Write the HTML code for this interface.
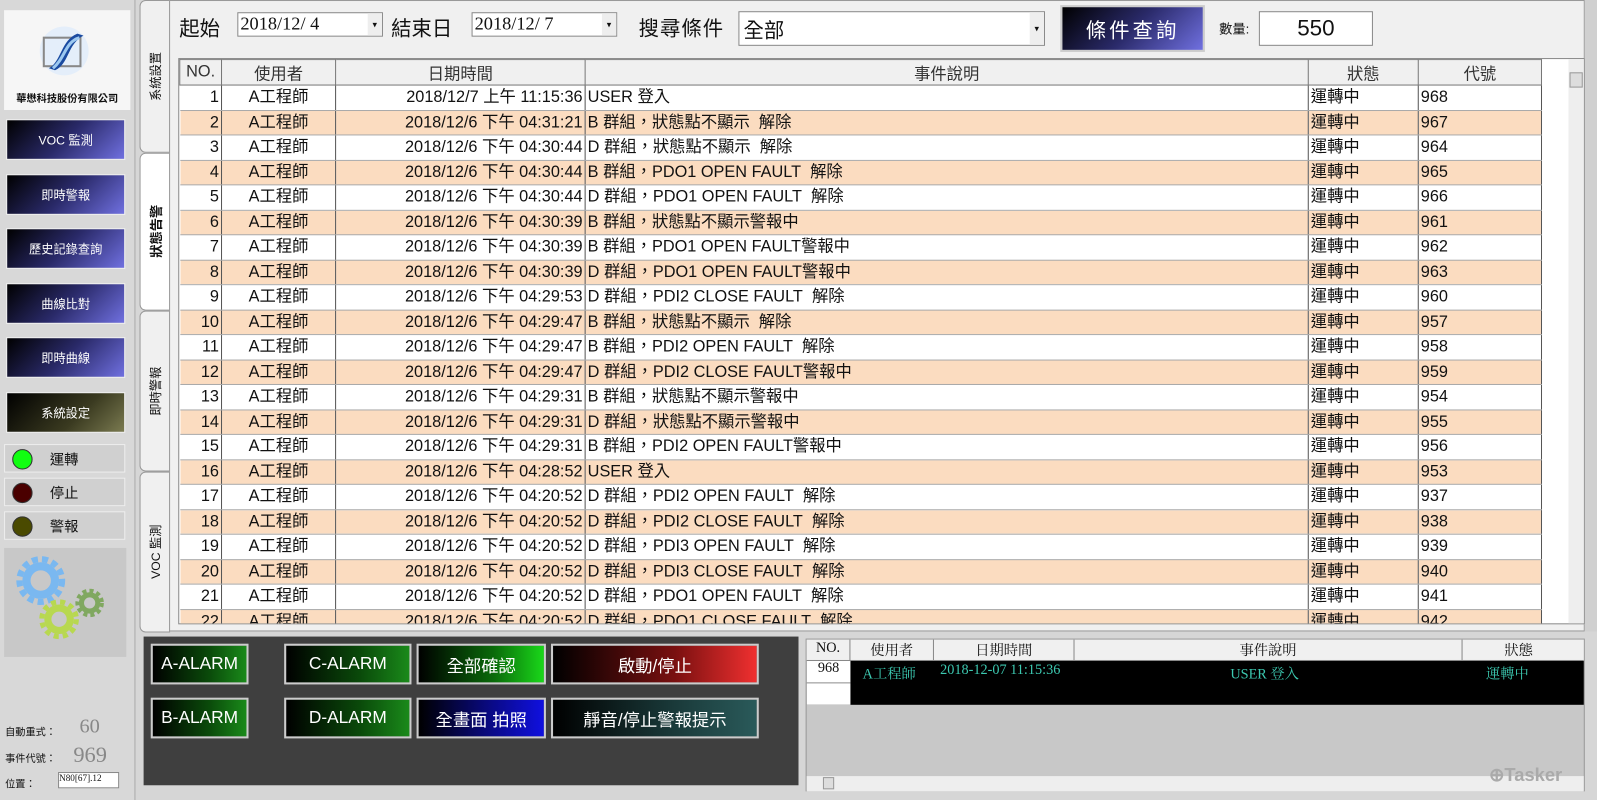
<!DOCTYPE html>
<html><head><meta charset="utf-8"><style>
*{box-sizing:border-box;margin:0;padding:0}
html,body{width:1597px;height:800px;overflow:hidden;background:#d6d6d6}
#w{width:1568px;height:786px;position:relative;transform:scale(1.0185);transform-origin:0 0;font-family:"Liberation Sans","Noto Sans CJK TC",sans-serif;color:#111}
.abs{position:absolute}
.nav{position:absolute;left:6px;width:117px;height:40px;border:1px solid #eee;color:#fff;font-size:12px;display:flex;align-items:center;justify-content:center;background:linear-gradient(135deg,#000 0%,#2a2a6a 50%,#7070e0 100%)}
.ind{position:absolute;left:4px;width:119px;height:28px;border:1px solid #eee;background:#d0d0d0;font-size:14px}
.ind i{position:absolute;left:7px;top:4px;width:20px;height:20px;border-radius:50%;border:1px solid #333}
.ind span{position:absolute;left:44px;top:4px}
.tab{position:absolute;left:137px;width:30px;background:#f0f0f0;border:1px solid #999;border-radius:6px 0 0 6px;font-size:12px;display:flex;align-items:center;justify-content:center}
.tab span{writing-mode:vertical-rl;text-orientation:sideways;transform:rotate(180deg);white-space:nowrap}
table{border-collapse:collapse;font-size:16px}
#g td{height:24.5px;border-right:1px solid #555;border-bottom:1px solid #aaa;padding:0 2px;white-space:nowrap;overflow:hidden;line-height:23px}
#g tr:nth-child(even) td{background:#fbdcc0}
#g tr:nth-child(odd) td{background:#fff}
#g th{height:24px;background:#f0f0f0;border:1px solid #777;font-weight:normal;color:#333}
.btn{position:absolute;border:2px solid #ccc;color:#fff;font-size:17px;display:flex;align-items:center;justify-content:center}
.gr{background:linear-gradient(90deg,#000 0%,#0a4a0a 60%,#1a8a1a 100%)}
</style></head><body><div id="w">
<div class="abs" style="left:0;top:0;width:133px;height:786px;border-right:1px solid #aaa;background:#d8d8d8"></div>
<div class="abs" style="left:4px;top:10px;width:124px;height:98px;background:#f6f6f6"></div>
<svg class="abs" style="left:38px;top:25px" width="50" height="50" viewBox="0 0 50 50"><circle cx="25" cy="25" r="24" fill="#e4eefa"/><rect x="5" y="12" width="36" height="28" fill="none" stroke="#888" stroke-width="2"/><path d="M10 42 C22 36 22 14 38 8 L44 10 C28 18 30 38 16 44Z" fill="#1a4aa0"/><path d="M14 42 C26 32 26 16 40 12" stroke="#9cc8f0" stroke-width="3" fill="none"/></svg>
<div class="abs" style="left:4px;top:88px;width:124px;text-align:center;font-size:10px;font-weight:bold">華懋科技股份有限公司</div>
<div class="nav" style="top:117px">VOC 監測</div>
<div class="nav" style="top:171px">即時警報</div>
<div class="nav" style="top:224px">歷史記錄查詢</div>
<div class="nav" style="top:278px">曲線比對</div>
<div class="nav" style="top:331px">即時曲線</div>
<div class="nav" style="top:385px;background:linear-gradient(135deg,#000,#3a3a20 60%,#7a7a50)">系統設定</div>
<div class="ind" style="top:436px"><i style="background:#1f1"></i><span>運轉</span></div>
<div class="ind" style="top:469px"><i style="background:#4a0000"></i><span>停止</span></div>
<div class="ind" style="top:502px"><i style="background:#4a4a00"></i><span>警報</span></div>
<div class="abs" style="left:4px;top:538px;width:120px;height:107px;background:#c8c8c8"></div>
<svg class="abs" style="left:10px;top:545px" width="100" height="90"><g fill="none"><circle cx="30" cy="25" r="21" stroke="#7ab8f0" stroke-width="6" stroke-dasharray="6 4"/><circle cx="30" cy="25" r="14" stroke="#7ab8f0" stroke-width="8"/><circle cx="48" cy="63" r="17" stroke="#b8d850" stroke-width="5" stroke-dasharray="5 4"/><circle cx="48" cy="63" r="11" stroke="#b8d850" stroke-width="7"/><circle cx="78" cy="47" r="12" stroke="#80a860" stroke-width="4" stroke-dasharray="4 3"/><circle cx="78" cy="47" r="8" stroke="#80a860" stroke-width="5"/></g></svg>
<div class="abs" style="left:5px;top:710px;font-size:10px">自動重式：</div>
<div class="abs" style="left:78px;top:702px;font-size:20px;color:#888;font-family:'Liberation Serif',serif">60</div>
<div class="abs" style="left:5px;top:736px;font-size:10px">事件代號：</div>
<div class="abs" style="left:72px;top:728px;font-size:22px;color:#888;font-family:'Liberation Serif',serif">969</div>
<div class="abs" style="left:5px;top:761px;font-size:10px">位置：</div>
<div class="abs" style="left:57px;top:758px;width:60px;height:16px;background:#fff;border:1px solid #888;font-size:9px;font-family:'Liberation Serif',serif">N80[67].12</div>
<div class="tab" style="top:0;height:150px"><span>系統設置</span></div>
<div class="tab" style="top:150px;height:155px;background:#fff;border-right:none"><span style="font-weight:bold;font-size:13px">狀態告警</span></div>
<div class="tab" style="top:305px;height:158px"><span>即時警報</span></div>
<div class="tab" style="top:463px;height:158px"><span>VOC 監測</span></div>
<div class="abs" style="left:166px;top:0;width:1390px;height:620px;background:#f0f0f0;border:1px solid #999"></div>
<div class="abs" style="left:1556px;top:0;width:12px;height:620px;background:#d0d0d0"></div>
<div class="abs" style="left:176px;top:12px;font-size:20px">起始</div>
<div class="abs" style="left:233px;top:12px;width:143px;height:24px;background:#fff;border:1px solid #888;font-size:18px;font-family:'Liberation Serif',serif;padding-left:2px">2018/12/ 4<span style="position:absolute;right:0;top:0;width:14px;height:22px;background:#eee;font-size:9px;text-align:center;line-height:22px">▾</span></div>
<div class="abs" style="left:384px;top:12px;font-size:20px">結束日</div>
<div class="abs" style="left:463px;top:12px;width:143px;height:24px;background:#fff;border:1px solid #888;font-size:18px;font-family:'Liberation Serif',serif;padding-left:2px">2018/12/ 7<span style="position:absolute;right:0;top:0;width:14px;height:22px;background:#eee;font-size:9px;text-align:center;line-height:22px">▾</span></div>
<div class="abs" style="left:627px;top:12px;font-size:20px;letter-spacing:1px">搜尋條件</div>
<div class="abs" style="left:725px;top:11px;width:301px;height:34px;background:#fff;border:1px solid #888;font-size:20px;padding:2px 4px">全部<span style="position:absolute;right:0;top:0;width:14px;height:32px;background:#eee;font-size:9px;text-align:center;line-height:32px">▾</span></div>
<div class="abs" style="left:1041px;top:5px;width:142px;height:46px;border:2px solid #ccc;background:linear-gradient(135deg,#000,#2a2a6a 50%,#7070e0);color:#fff;font-size:20px;letter-spacing:3px;display:flex;align-items:center;justify-content:center">條件查詢</div>
<div class="abs" style="left:1197px;top:18px;font-size:13px">數量:</div>
<div class="abs" style="left:1236px;top:11px;width:112px;height:34px;background:#fff;border:1px solid #888;font-size:22px;text-align:center;line-height:32px">550</div>
<div class="abs" style="left:175px;top:57px;width:1381px;height:556px;background:#fff;border:1px solid #888;overflow:hidden">
<table id="g" style="table-layout:fixed;width:1338px">
<colgroup><col style="width:41px"><col style="width:112px"><col style="width:245px"><col style="width:710px"><col style="width:108px"><col style="width:121px"></colgroup>
<tr><th>NO.</th><th>使用者</th><th>日期時間</th><th>事件說明</th><th>狀態</th><th>代號</th></tr>
</table></div>
<div class="abs" style="left:1540px;top:58px;width:15px;height:554px;background:#eee"><div style="margin:13px 1px;height:15px;border:1px solid #999;background:#ddd"></div></div>
<div class="abs" style="left:141px;top:625px;width:643px;height:146px;background:#3f3f3f"></div>
<div class="btn gr" style="left:148px;top:632px;width:96px;height:40px">A-ALARM</div>
<div class="btn gr" style="left:279px;top:632px;width:125px;height:40px">C-ALARM</div>
<div class="btn" style="left:409px;top:632px;width:127px;height:40px;background:linear-gradient(90deg,#000,#0a6a0a 60%,#1ad81a)">全部確認</div>
<div class="btn" style="left:541px;top:632px;width:204px;height:40px;background:linear-gradient(90deg,#000,#7a1010 60%,#f03030)">啟動/停止</div>
<div class="btn gr" style="left:148px;top:685px;width:96px;height:40px">B-ALARM</div>
<div class="btn gr" style="left:279px;top:685px;width:125px;height:40px">D-ALARM</div>
<div class="btn" style="left:409px;top:685px;width:127px;height:40px;background:linear-gradient(90deg,#000,#0a0a8a 60%,#1010e0)">全畫面 拍照</div>
<div class="btn" style="left:541px;top:685px;width:204px;height:40px;background:linear-gradient(90deg,#000,#1a3a3a 60%,#2a5a5a)">靜音/停止警報提示</div>
<div class="abs" style="left:791px;top:627px;width:765px;height:150px;background:#c8c8c8;border:1px solid #999;font-family:'Liberation Serif','Noto Serif CJK SC',serif;font-size:14px">
<div class="abs" style="left:0;top:0;width:763px;height:21px;background:#f0f0f0;border-bottom:1px solid #888"></div>
<div class="abs" style="left:0;top:1px;width:42px;text-align:center">NO.</div>
<div class="abs" style="left:42px;top:0;width:82px;height:21px;border-left:1px solid #888;text-align:center">使用者</div>
<div class="abs" style="left:124px;top:0;width:138px;height:21px;border-left:1px solid #888;text-align:center">日期時間</div>
<div class="abs" style="left:262px;top:0;width:382px;height:21px;border-left:1px solid #888;border-right:1px solid #888;text-align:center">事件說明</div>
<div class="abs" style="left:644px;top:0;width:110px;text-align:center">狀態</div>
<div class="abs" style="left:0;top:21px;width:763px;height:43px;background:#000"></div>
<div class="abs" style="left:0;top:21px;width:43px;height:22px;background:#fff;text-align:center;border-bottom:1px solid #888">968</div>
<div class="abs" style="left:0;top:43px;width:43px;height:21px;background:#fff"></div>
<div class="abs" style="left:55px;top:23px;color:#3cc8b0">A工程師</div>
<div class="abs" style="left:131px;top:23px;color:#3cc8b0">2018-12-07 11:15:36</div>
<div class="abs" style="left:416px;top:23px;color:#3cc8b0">USER 登入</div>
<div class="abs" style="left:667px;top:23px;color:#3cc8b0">運轉中</div>
<div class="abs" style="left:0;top:134px;width:763px;height:15px;background:#eee"><div style="margin:1px 0 0 16px;width:11px;height:12px;border:1px solid #999;background:#ddd"></div></div>
<div class="abs" style="left:670px;top:123px;font-family:'Liberation Sans',sans-serif;font-weight:bold;font-size:18px;color:#aaa">⊕Tasker</div>
</div>
</div>
<script>
const d=[["1","2018/12/7 上午 11:15:36","USER 登入","968"],["2","2018/12/6 下午 04:31:21","B 群組，狀態點不顯示  解除","967"],["3","2018/12/6 下午 04:30:44","D 群組，狀態點不顯示  解除","964"],["4","2018/12/6 下午 04:30:44","B 群組，PDO1 OPEN FAULT  解除","965"],["5","2018/12/6 下午 04:30:44","D 群組，PDO1 OPEN FAULT  解除","966"],["6","2018/12/6 下午 04:30:39","B 群組，狀態點不顯示警報中","961"],["7","2018/12/6 下午 04:30:39","B 群組，PDO1 OPEN FAULT警報中","962"],["8","2018/12/6 下午 04:30:39","D 群組，PDO1 OPEN FAULT警報中","963"],["9","2018/12/6 下午 04:29:53","D 群組，PDI2 CLOSE FAULT  解除","960"],["10","2018/12/6 下午 04:29:47","B 群組，狀態點不顯示  解除","957"],["11","2018/12/6 下午 04:29:47","B 群組，PDI2 OPEN FAULT  解除","958"],["12","2018/12/6 下午 04:29:47","D 群組，PDI2 CLOSE FAULT警報中","959"],["13","2018/12/6 下午 04:29:31","B 群組，狀態點不顯示警報中","954"],["14","2018/12/6 下午 04:29:31","D 群組，狀態點不顯示警報中","955"],["15","2018/12/6 下午 04:29:31","B 群組，PDI2 OPEN FAULT警報中","956"],["16","2018/12/6 下午 04:28:52","USER 登入","953"],["17","2018/12/6 下午 04:20:52","D 群組，PDI2 OPEN FAULT  解除","937"],["18","2018/12/6 下午 04:20:52","D 群組，PDI2 CLOSE FAULT  解除","938"],["19","2018/12/6 下午 04:20:52","D 群組，PDI3 OPEN FAULT  解除","939"],["20","2018/12/6 下午 04:20:52","D 群組，PDI3 CLOSE FAULT  解除","940"],["21","2018/12/6 下午 04:20:52","D 群組，PDO1 OPEN FAULT  解除","941"],["22","2018/12/6 下午 04:20:52","D 群組，PDO1 CLOSE FAULT  解除","942"]];
const t=document.getElementById('g');let h='';
for(const r of d)h+=`<tr><td style="text-align:right">${r[0]}</td><td style="text-align:center">A工程師</td><td style="text-align:right">${r[1]}</td><td>${r[2].replace(/  /g,'&nbsp; ')}</td><td>運轉中</td><td>${r[3]}</td></tr>`;
t.insertAdjacentHTML('beforeend',h);
</script>
</body></html>
